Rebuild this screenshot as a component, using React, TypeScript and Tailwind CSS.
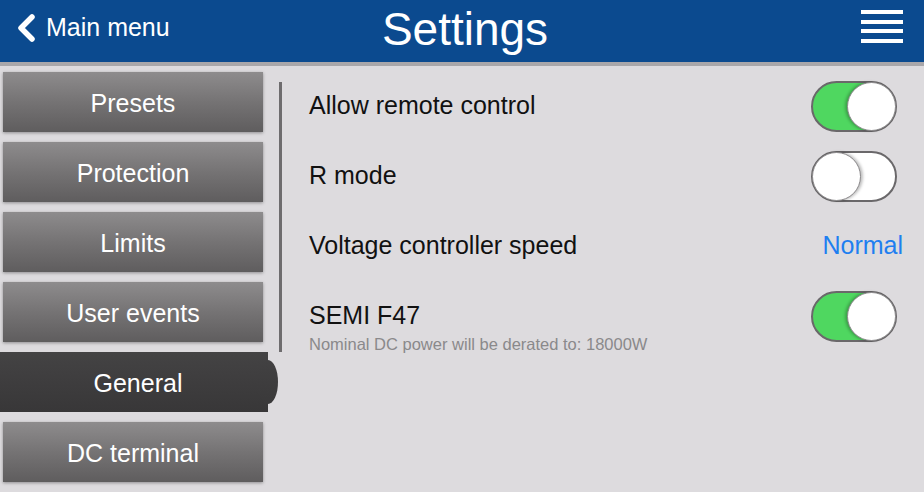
import React from 'react';

const font = { fontFamily: '"Liberation Sans", Arial, sans-serif' };

const menu = ['Presets', 'Protection', 'Limits', 'User events', 'General', 'DC terminal'];

function Toggle({ on }: { on: boolean }) {
  return (
    <div
      className={`relative w-[86px] h-[51px] rounded-full border-2 border-[#6a686a] ${
        on ? 'bg-[#4fd760]' : 'bg-white'
      }`}
    >
      <div
        className={`absolute top-[-1px] w-[49px] h-[49px] rounded-full bg-white border border-[#8a888a] ${
          on ? 'right-[-1px] shadow-[-2px_0_3px_rgba(0,0,0,0.25)]' : 'left-[-1px] shadow-[2px_0_3px_rgba(0,0,0,0.25)]'
        }`}
      />
    </div>
  );
}

export default function App() {
  return (
    <div className="w-[924px] h-[492px] overflow-hidden bg-[#dddbde] flex flex-col" style={font}>
      {/* Header */}
      <div className="h-[62px] bg-[#0b4a8f] flex items-center shrink-0">
        <div className="flex items-center pl-[16px] w-[300px] mb-[7px]">
          <svg width="22" height="30" viewBox="0 0 22 30" className="mr-[8px]">
            <polyline
              points="16,4 5,15 16,26"
              fill="none"
              stroke="white"
              strokeWidth="5.5"
              strokeLinecap="round"
              strokeLinejoin="round"
            />
          </svg>
          <span className="text-white text-[25px] leading-none">Main menu</span>
        </div>
        <div className="flex-1 text-center text-white text-[46px] leading-none pl-[6px] mb-[4px]">Settings</div>
        <div className="w-[300px] flex justify-end pr-[21px]">
          <div className="flex flex-col gap-[5.5px] w-[42px] mb-[9px]">
            <div className="h-[4px] bg-white" />
            <div className="h-[4px] bg-white" />
            <div className="h-[4px] bg-white" />
            <div className="h-[4px] bg-white" />
          </div>
        </div>
      </div>
      <div className="h-[4px] bg-[#a9a7aa] shrink-0" />

      {/* Body */}
      <div className="flex flex-1">
        {/* Sidebar */}
        <div className="w-[279px] shrink-0 flex flex-col gap-[10px] pt-[6px]">
          {menu.map((item) =>
            item === 'General' ? (
              <div key={item} className="relative h-[60px] w-[268px] bg-gradient-to-b from-[#444344] to-[#383738] flex items-center justify-center">
                <div className="absolute right-[-10px] top-[8px] w-[20px] h-[44px] rounded-[50%] bg-gradient-to-b from-[#424142] to-[#3a393a]" />
                <span className="relative text-white text-[25px] pl-[8px] pt-[3px]">{item}</span>
              </div>
            ) : (
              <div
                key={item}
                className="h-[60px] ml-[3px] w-[260px] bg-gradient-to-b from-[#8e8c8d] via-[#757374] to-[#5f5d5e] shadow-[0_1px_3px_rgba(0,0,0,0.35)] flex items-center justify-center"
              >
                <span className="text-white text-[25px] pt-[3px]">{item}</span>
              </div>
            )
          )}
        </div>

        {/* Divider */}
        <div className="w-[3px] h-[270px] mt-[16px] bg-[#6e6c6e] shrink-0" />

        {/* Content */}
        <div className="flex-1 flex flex-col pt-[5px] pl-[27px] pr-[27px]">
          <div className="h-[70px] flex items-center justify-between">
            <span className="text-[25px] text-[#111]">Allow remote control</span>
            <Toggle on />
          </div>
          <div className="h-[70px] flex items-center justify-between">
            <span className="text-[25px] text-[#111]">R mode</span>
            <Toggle on={false} />
          </div>
          <div className="h-[70px] flex items-center justify-between">
            <span className="text-[25px] text-[#111]">Voltage controller speed</span>
            <span className="text-[25px] text-[#1f7ff0] mr-[-6px]">Normal</span>
          </div>
          <div className="h-[70px] flex items-center justify-between">
            <span className="text-[25px] text-[#111]">SEMI F47</span>
            <Toggle on />
          </div>
          <div className="mt-[-15px] text-[16.5px] text-[#8a898b] leading-none">
            Nominal DC power will be derated to: 18000W
          </div>
        </div>
      </div>
    </div>
  );
}
